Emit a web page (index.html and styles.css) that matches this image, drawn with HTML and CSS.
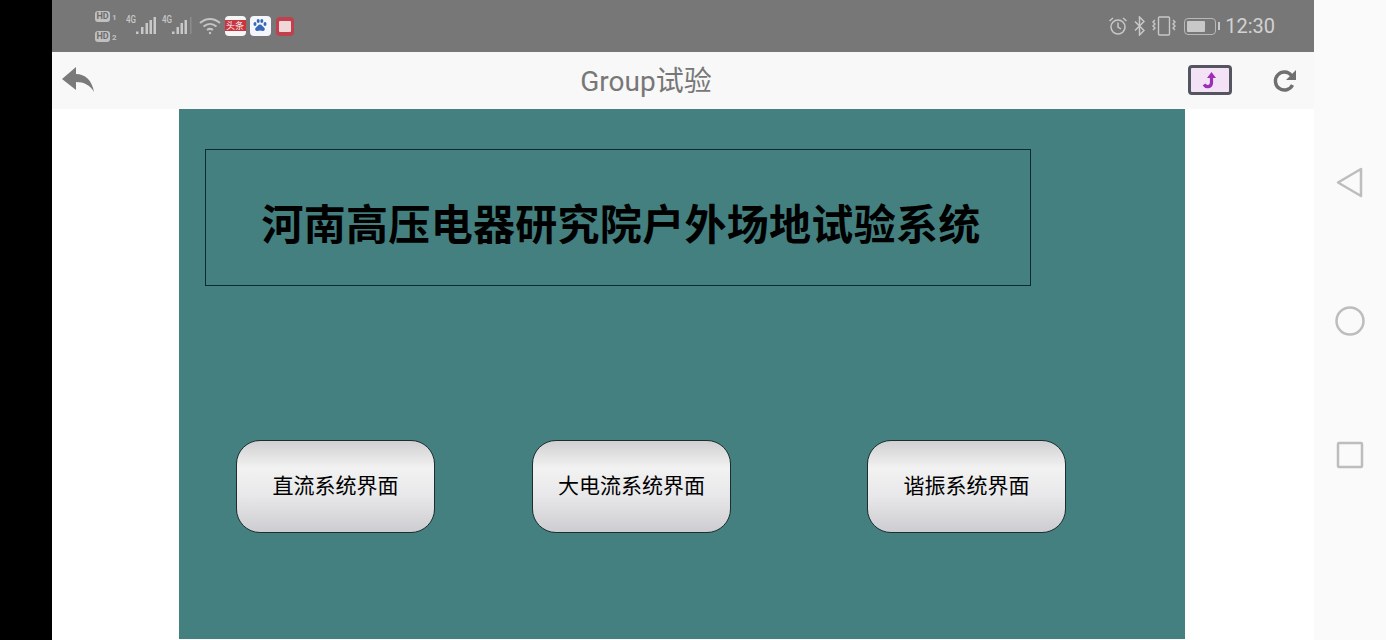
FILE: index.html
```html
<!DOCTYPE html>
<html lang="zh-CN">
<head>
  <meta charset="UTF-8" />
  <title>Group试验</title>
  <link rel="stylesheet" href="styles.css">
</head>
<body>
  <div class="left-edge"></div>

  <div class="screen">
    <!-- status bar -->
    <div class="status-bar">
      <div class="status-left">
        <div class="hd-stack">
          <div class="hd-row"><span class="hd">HD</span><span class="sim">1</span></div>
          <div class="hd-row"><span class="hd">HD</span><span class="sim">2</span></div>
        </div>
        <div class="signal">
          <span class="net">4G</span>
          <svg width="20" height="20" viewBox="0 0 20 20"><path d="M0 15.500h2.500V18H0zM5 11h2.500v7H5zM9.500 7H12v11H9.500zM13.500 4H16v14h-2.500zM17.500 1H20v17h-2.500z" fill="#c8c8c8"/></svg>
        </div>
        <div class="signal second">
          <span class="net">4G</span>
          <svg width="20" height="20" viewBox="0 0 20 20"><path d="M0 15.500h2.500V18H0zM4.500 11H7v7H4.500zM8.500 7H11v11H8.500zM12.500 4H15v14h-2.500z" fill="#c8c8c8"/><path d="M18 1h1.500v17H18z" fill="#8d8d8d"/></svg>
        </div>
        <svg class="wifi" width="22" height="18" viewBox="0 0 22 18" fill="none" stroke="#c4c4c4" stroke-width="2">
          <path d="M1 6c6-5.500 14-5.500 20 0"/>
          <path d="M4.500 9.500c4-3.500 9-3.500 13 0"/>
          <path d="M8 13c2-1.500 4-1.500 6 0"/>
          <circle cx="11" cy="16" r="1.200" fill="#c4c4c4" stroke="none"/>
        </svg>
        <div class="app-icon toutiao"><span>头条</span></div>
        <div class="app-icon baidu">
          <svg width="16" height="16" viewBox="0 0 16 16" fill="#3a66b8">
            <ellipse cx="3" cy="6" rx="1.500" ry="2"/><ellipse cx="6.200" cy="3" rx="1.500" ry="2"/><ellipse cx="9.800" cy="3" rx="1.500" ry="2"/><ellipse cx="13" cy="6" rx="1.500" ry="2"/>
            <path d="M8 6.500c-2 0-2.500 2-4 3-1.500 1.200-.8 3.500 1.200 3.500 1 0 1.800-.4 2.800-.4s1.800.4 2.800.4c2 0 2.700-2.300 1.200-3.500-1.500-1-2-3-4-3z"/>
          </svg>
        </div>
        <div class="app-icon book"><i></i></div>
      </div>
      <div class="status-right">
        <svg width="20" height="20" viewBox="0 0 20 20" fill="none" stroke="#c8c8c8" stroke-width="1.500">
          <circle cx="10" cy="11" r="7"/>
          <path d="M10 6.500V11l3 2"/>
          <path d="M1.500 5l3.500-3M18.500 5L15 2"/>
        </svg>
        <svg class="bt" width="11" height="20" viewBox="0 0 11 20" fill="none" stroke="#c8c8c8" stroke-width="1.500">
          <path d="M1 5.500l9 9-4.500 4.500V1L10 5.500l-9 9"/>
        </svg>
        <svg class="vibrate" width="24" height="20" viewBox="0 0 24 20" fill="none" stroke="#c8c8c8" stroke-width="1.400">
          <rect x="6.500" y="1" width="11" height="18" rx="1"/>
          <path d="M3 4l-2 2 2 2-2 2 2 2-2 2M21 4l2 2-2 2 2 2-2 2 2 2"/>
        </svg>
        <div class="battery"><div class="battery-level"></div></div>
        <span class="clock">12:30</span>
      </div>
    </div>

    <!-- app bar -->
    <div class="app-bar">
      <svg class="back" width="34" height="28" viewBox="0 0 34 28">
        <path d="M1 13L15 1v7c9 0 16 6 18 18-4-7-10-10-18-10v8z" fill="#7a7a7a"/>
      </svg>
      <div class="page-title">Group试验</div>
      <div class="jump-btn">
        <svg width="16" height="18" viewBox="0 0 16 18" fill="none">
          <path d="M2 13.500c2 3 7 3 7.500-1.500V6" stroke="#9b2fb5" stroke-width="3.200"/>
          <path d="M5 7l4.500-6L14 7z" fill="#9b2fb5"/>
        </svg>
      </div>
      <svg class="refresh" width="26" height="26" viewBox="0 0 26 26" fill="none">
        <path d="M20.500 17a9 9 0 1 1-1-9.500" stroke="#6f6f6f" stroke-width="3.400"/>
        <path d="M24 2v10H14z" fill="#6f6f6f"/>
      </svg>
    </div>

    <!-- page content -->
    <div class="content">
      <div class="panel">
        <div class="title-box">河南高压电器研究院户外场地试验系统</div>
        <div class="button-row">
          <button class="sys-btn">直流系统界面</button>
          <button class="sys-btn mid">大电流系统界面</button>
          <button class="sys-btn last">谐振系统界面</button>
        </div>
      </div>
    </div>
  </div>

  <!-- android nav keys -->
  <div class="nav-rail">
    <svg width="28" height="32" viewBox="0 0 28 32" fill="none" stroke="#bdbdbd" stroke-width="2.500" stroke-linejoin="round">
      <path d="M25 2v27L2 15.500z"/>
    </svg>
    <svg width="30" height="30" viewBox="0 0 30 30" fill="none" stroke="#bdbdbd" stroke-width="2.500">
      <circle cx="15" cy="15" r="13.500"/>
    </svg>
    <svg width="28" height="28" viewBox="0 0 28 28" fill="none" stroke="#bdbdbd" stroke-width="2.500">
      <rect x="2" y="2" width="24" height="24" rx="1"/>
    </svg>
  </div>
</body>
</html>
```

FILE: styles.css
```css
* {
  box-sizing: border-box;
}

body {
  margin: 0;
  width: 1386px;
  height: 640px;
  display: flex;
  overflow: hidden;
  background: #fff;
  font-family: "Roboto", "Noto Sans CJK SC", sans-serif;
}

.left-edge {
  width: 52px;
  background: #000;
}

.screen {
  width: 1262px;
  display: flex;
  flex-direction: column;
}

/* status bar */
.status-bar {
  height: 52px;
  background: #777777;
  display: flex;
  justify-content: space-between;
  align-items: center;
  padding: 0 39px 0 43px;
}

.status-left,
.status-right {
  display: flex;
  align-items: center;
}

.hd-stack {
  display: flex;
  flex-direction: column;
  gap: 9px;
  margin-top: 1px;
}

.hd-row {
  display: flex;
  align-items: flex-end;
  gap: 2px;
}

.hd {
  width: 15px;
  height: 11px;
  border-radius: 3px;
  background: #c0c0c0;
  color: #6c6c6c;
  font-size: 9px;
  font-weight: 700;
  line-height: 11px;
  text-align: center;
}

.sim {
  color: #c0c0c0;
  font-size: 8px;
  font-weight: 700;
  line-height: 8px;
}

.signal {
  position: relative;
  width: 30px;
  height: 24px;
  margin-left: 9px;
  display: flex;
  justify-content: flex-end;
  align-items: flex-end;
}

.signal svg {
  margin-bottom: 2px;
}

.signal.second {
  margin-left: 6px;
}

.net {
  position: absolute;
  left: 0;
  top: 0;
  color: #c8c8c8;
  font-size: 10px;
  font-weight: 500;
  transform: scaleX(0.8);
  transform-origin: left top;
}

.wifi {
  margin-left: 7px;
}

.app-icon {
  width: 21px;
  height: 20px;
  border-radius: 4px;
  display: flex;
  align-items: center;
  justify-content: center;
}

.toutiao {
  margin-left: 4px;
  background: linear-gradient(#f6f6f6 0 20%, #c9343f 20% 75%, #f6f6f6 75%);
  color: #f4f4f4;
  font-size: 9px;
  line-height: 10px;
}

.baidu {
  margin-left: 4px;
  background: #f3f6fb;
}

.book {
  width: 18px;
  height: 19px;
  margin-left: 5px;
  background: #c0404e;
}

.book i {
  width: 12px;
  height: 11px;
  background: #f0d8d8;
  border-radius: 1px;
}

.bt {
  margin-left: 6px;
}

.vibrate {
  margin-left: 7px;
}

.battery {
  position: relative;
  width: 32px;
  height: 17px;
  margin-left: 8px;
  margin-right: 9px;
  padding: 2px;
  border: 1.500px solid #b8b8b8;
  border-radius: 4px;
}

.battery::after {
  content: "";
  position: absolute;
  right: -5px;
  top: 3px;
  width: 2px;
  height: 8px;
  background: #c8c8c8;
}

.battery-level {
  width: 70%;
  height: 100%;
  background: #c8c8c8;
  border-radius: 1px;
}

.clock {
  color: #d2d2d2;
  font-size: 20px;
}

/* app bar */
.app-bar {
  position: relative;
  height: 57px;
  background: #f8f8f8;
  display: flex;
  align-items: center;
  padding: 0 16px 0 9px;
}

.back {
  margin-bottom: 2px;
}

.page-title {
  position: absolute;
  left: 0;
  right: 74px;
  top: 12px;
  text-align: center;
  color: #777;
  font-size: 28px;
  line-height: 36px;
}

.jump-btn {
  width: 44px;
  height: 30px;
  margin-left: auto;
  margin-bottom: 2px;
  border: 3px solid #555560;
  border-radius: 4px;
  background: #f3e2f6;
  display: flex;
  align-items: center;
  justify-content: center;
}

.refresh {
  margin-left: 40px;
}

/* main panel */
.content {
  padding-left: 127px;
}

.panel {
  width: 1006px;
  height: 530px;
  background: #44807f;
  padding: 40px 0 0 26px;
}

.title-box {
  width: 826px;
  height: 137px;
  border: 1px solid #0c2a30;
  display: flex;
  align-items: center;
  justify-content: center;
  color: #000;
  font-size: 42px;
  font-weight: 700;
  letter-spacing: 0.3px;
  white-space: nowrap;
  padding: 8px 0 0 6px;
}

.button-row {
  display: flex;
  margin-top: 154px;
  padding-left: 31px;
}

.sys-btn {
  width: 199px;
  height: 93px;
  border: 1px solid #1e2e30;
  border-radius: 24px;
  background: linear-gradient(#d0d0d2 0%, #f2f2f2 30%, #e8e8ea 60%, #cdcdd1 100%);
  color: #000;
  font-family: "Noto Sans CJK SC", sans-serif;
  font-size: 21px;
  padding: 0 0 5px;
}

.sys-btn.mid {
  margin-left: 97px;
}

.sys-btn.last {
  margin-left: 136px;
}

/* nav rail */
.nav-rail {
  width: 72px;
  background: #fafafa;
  display: flex;
  flex-direction: column;
  align-items: center;
  gap: 107px;
  padding-top: 167px;
}

.nav-rail svg:last-child {
  margin-top: -2px;
}
```
